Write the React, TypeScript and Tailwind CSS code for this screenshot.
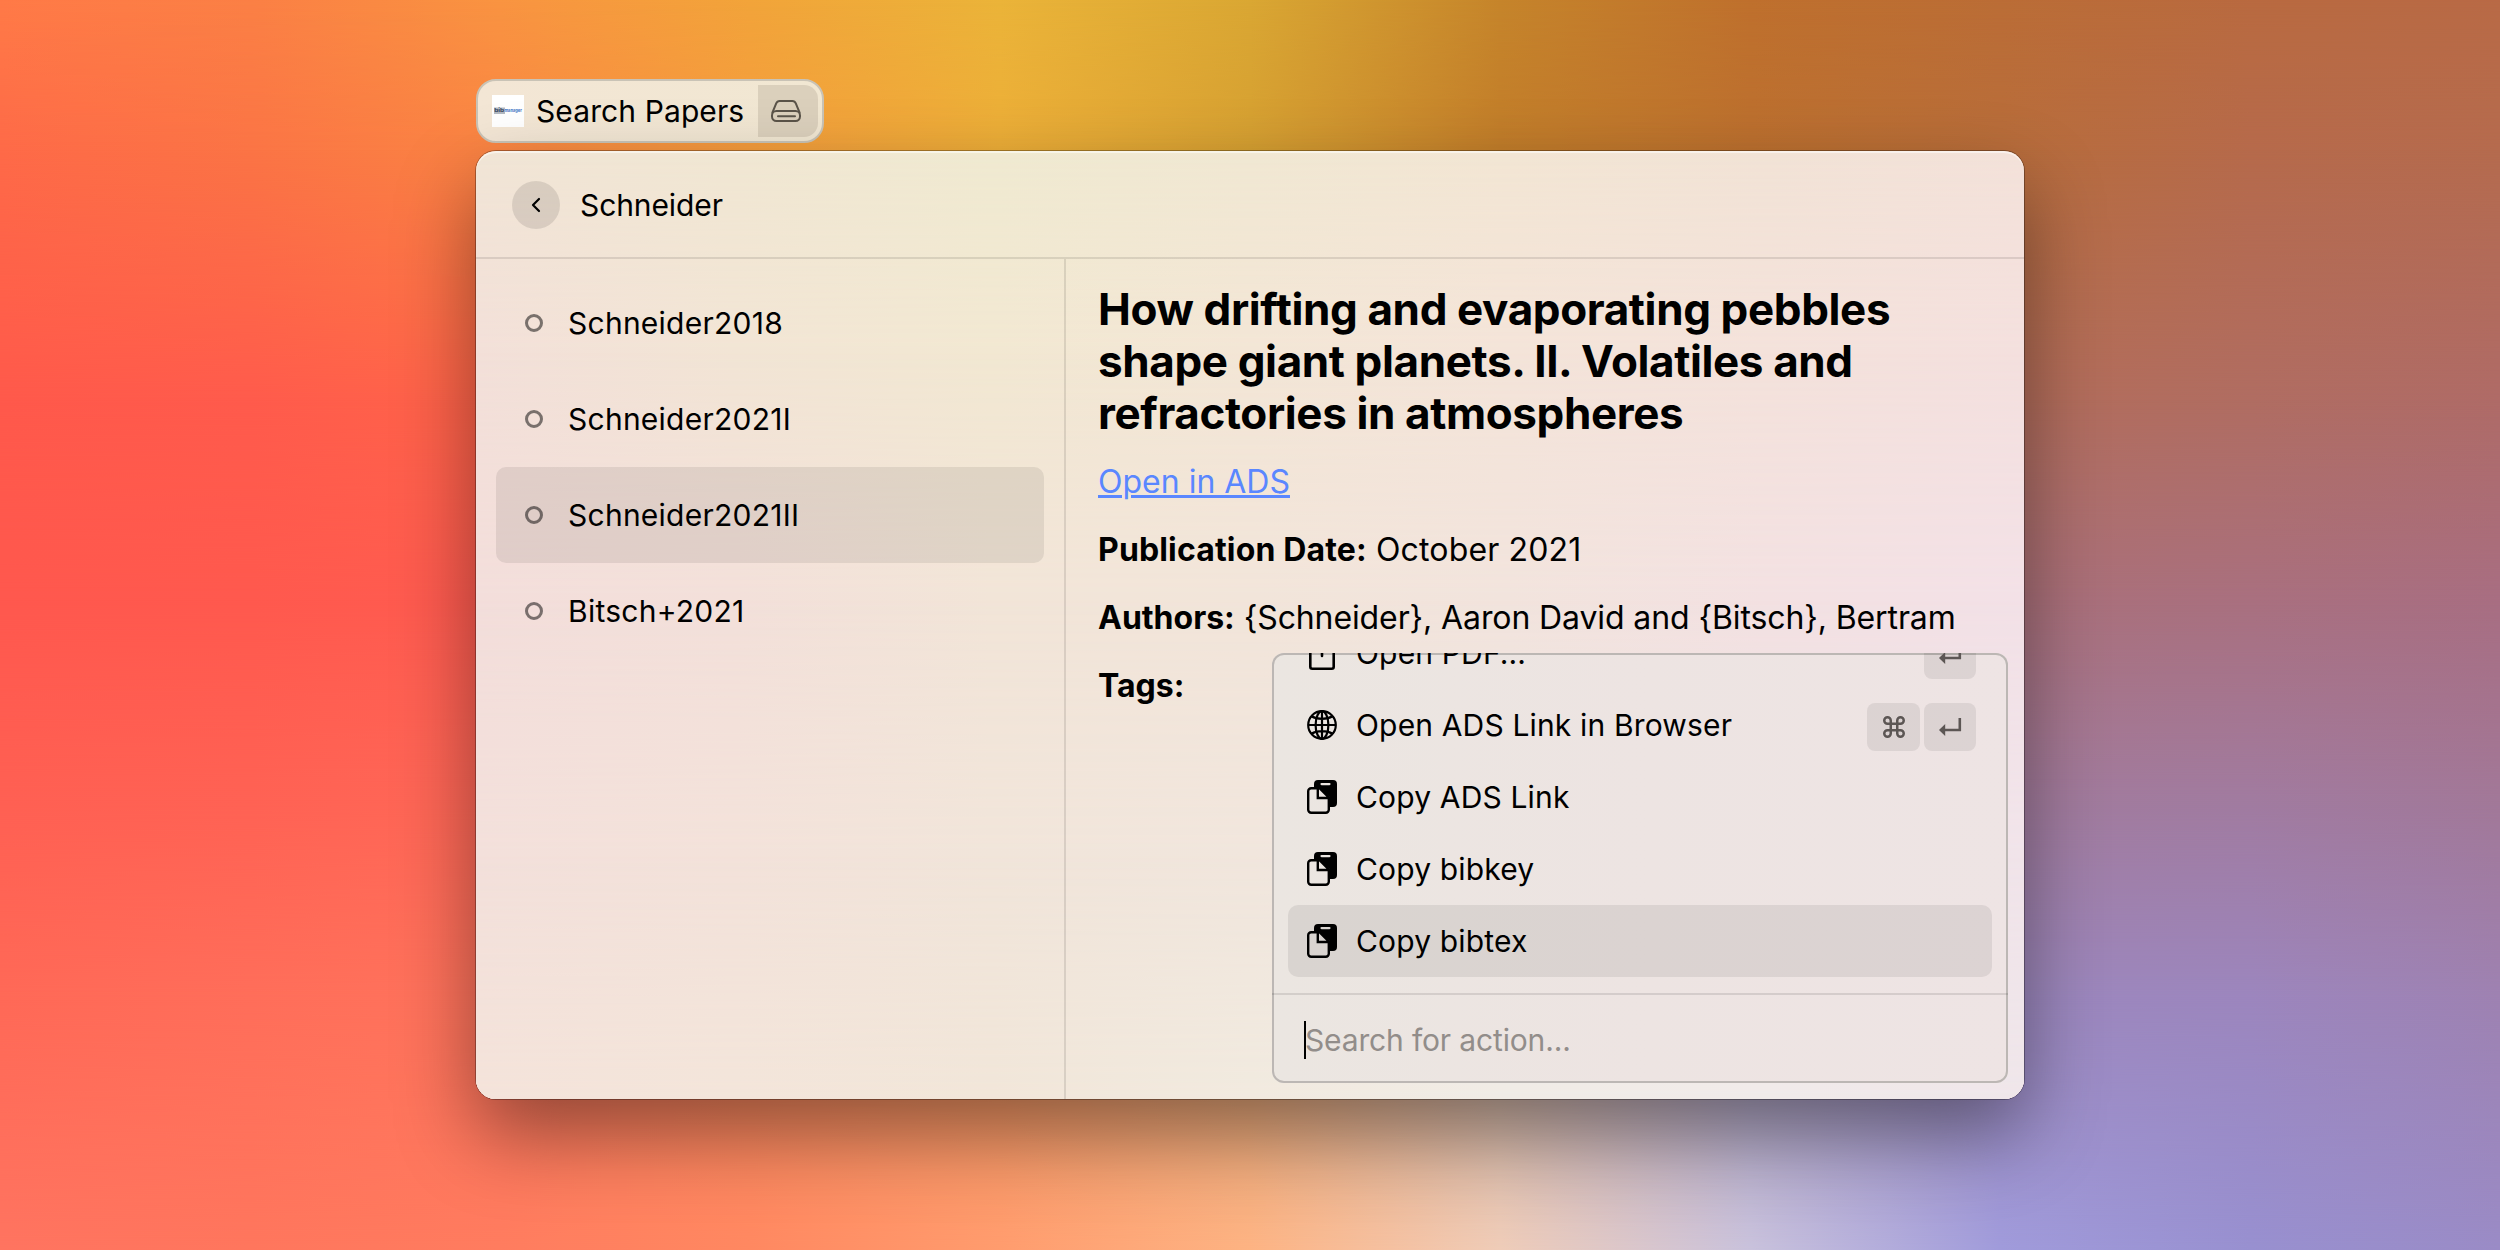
import React from "react";
import { ChevronLeft, Command } from "lucide-react";

type MeshRow = { at: number; colors: string[] };

const WALLPAPER: MeshRow[] = [
  { at: 0, colors: ["#ff7a47", "#fb8045", "#f99441", "#f2a43a", "#ebb439", "#daa733", "#c6852b", "#bf702d", "#bb6d36", "#b96a40", "#b96a46"] },
  { at: 12, colors: ["#fe6a48", "#fb7445", "#fa8543", "#f59c3d", "#edae38", "#d6a032", "#c27d2a", "#bc702f", "#b86d3b", "#b66a4b", "#b56b4e"] },
  { at: 32, colors: ["#ff594b", "#ff5b4c", "#ff6549", "#f08040", "#e09040", "#cc8a40", "#bd7748", "#b87050", "#b36d5a", "#b06d62", "#af6b67"] },
  { at: 48, colors: ["#ff584e", "#ff594e", "#ff5c50", "#f87850", "#e88858", "#cf8660", "#bc7868", "#b17474", "#aa7079", "#a9707f", "#a86e82"] },
  { at: 64, colors: ["#ff6053", "#ff6254", "#ff6857", "#fa8058", "#f09060", "#d89c78", "#bb9290", "#a88098", "#a27b9c", "#a17ba0", "#a27898"] },
  { at: 80, colors: ["#ff6957", "#ff6e5a", "#ff745c", "#fc8a5e", "#f59862", "#e3a678", "#c6aca0", "#a598ba", "#9c88be", "#9c86be", "#9e82b2"] },
  { at: 100, colors: ["#ff7460", "#ff765d", "#ff7c5f", "#ff8861", "#ff9c6e", "#fdb383", "#efccb8", "#c9c2dc", "#a09bdb", "#9890d0", "#9a8bc6"] },
];

const GLASS: MeshRow[] = [
  { at: 0, colors: ["#f1e5d6", "#f1e7d3", "#f0ead1", "#f1e8d3", "#f3e6d4", "#f2e3d6", "#f4e2da"] },
  { at: 21, colors: ["#f3e0d9", "#f2e5d5", "#f2e8d2", "#f3e6d6", "#f4e4d9", "#f4e2db", "#f4e0de"] },
  { at: 47, colors: ["#f3dedb", "#f3e0da", "#f2e5d8", "#f2e5da", "#f2e4dd", "#f3e1e2", "#f3e1e7"] },
  { at: 74, colors: ["#f3e0db", "#f3e2da", "#f1e5da", "#f1e6dd", "#f0e5e2", "#f1e3e5", "#f1e4ea"] },
  { at: 100, colors: ["#f4e3da", "#f3e5da", "#f1e6d9", "#f1eadf", "#f0ece6", "#f0ebea", "#efe6ea"] },
];

function Mesh({ rows }: { rows: MeshRow[] }) {
  return (
    <div aria-hidden="true" className="absolute inset-0 overflow-hidden rounded-[inherit]">
      {rows.map((row, i) => {
        const mask =
          i === 0 ? undefined : `linear-gradient(to bottom, transparent ${rows[i - 1].at}%, black ${row.at}%)`;
        return (
          <div
            key={row.at}
            className="absolute inset-0"
            style={{
              backgroundImage: `linear-gradient(to right, ${row.colors.join(", ")})`,
              maskImage: mask,
              WebkitMaskImage: mask,
            }}
          />
        );
      })}
    </div>
  );
}

function BibLogo() {
  return (
    <svg width="32" height="32" viewBox="0 0 32 32" overflow="visible">
      <rect width="32" height="32" fill="#fff" />
      <rect x="2" y="12.500" width="11" height="6.500" fill="#b4bac2" />
      <text x="2.200" y="17.400" fontSize="5" fontWeight="700" textLength="10" lengthAdjust="spacingAndGlyphs" fill="#33435c">
        bib
      </text>
      <text x="12.400" y="17.400" fontSize="5" fontWeight="700" textLength="17.500" lengthAdjust="spacingAndGlyphs" fill="#3b74c4">
        manager
      </text>
    </svg>
  );
}

function DriveIcon() {
  return (
    <svg width="32" height="24" viewBox="0 0 32 24" fill="none" stroke="#5b5449" strokeWidth="2" strokeLinecap="round" strokeLinejoin="round">
      <path d="M2.400 13.600 6.200 4.400C6.900 2.700 8 2 9.600 2h12.800c1.600 0 2.700.7 3.400 2.400l3.800 9.200" />
      <rect x="2" y="12" width="28" height="10" rx="4.400" />
      <path d="M8 17.300h17" />
    </svg>
  );
}

function OpenIcon() {
  return (
    <svg width="30" height="36" viewBox="0 0 30 36" fill="none" stroke="#000" strokeWidth="2.600" strokeLinecap="round">
      <path d="M11 11H5.300a2 2 0 0 0-2 2v18.700a2 2 0 0 0 2 2h19.400a2 2 0 0 0 2-2V13a2 2 0 0 0-2-2H19M15 21V3M10.500 7.500 15 3l4.500 4.500" />
    </svg>
  );
}

function GlobeIcon() {
  return (
    <svg width="30" height="30" viewBox="0 0 30 30" fill="none" stroke="#000" strokeWidth="2.200">
      <circle cx="15" cy="15" r="13.800" />
      <ellipse cx="15" cy="15" rx="6.400" ry="13.800" />
      <path d="M15 1v28M1 15h28M4.500 6.300C10 9.800 20 9.800 25.500 6.300M4.500 23.700C10 20.200 20 20.200 25.500 23.700" />
    </svg>
  );
}

function CopyIcon() {
  return (
    <svg width="30" height="34" viewBox="0 0 30 34">
      <path
        fillRule="evenodd"
        d="M7 8V4a4 4 0 0 1 4-4h15a4 4 0 0 1 4 4v19a4 4 0 0 1-4 4h-3V17.500L12.500 8ZM14.500 3a1 1 0 0 0 0 2.200h8a1 1 0 0 0 0-2.200Z"
      />
      <path
        d="M12.500 8.200H4.200a3 3 0 0 0-3 3v18.600a3 3 0 0 0 3 3h14.600a3 3 0 0 0 3-3V17.500ZM10.800 8v10H22"
        fill="none"
        stroke="#000"
        strokeWidth="2.400"
      />
    </svg>
  );
}

function ReturnIcon() {
  return (
    <svg width="24" height="20" viewBox="0 0 24 20">
      <path d="M21.800 1v12H6" fill="none" stroke="#5c5654" strokeWidth="2.600" />
      <path d="M1 13 7.200 7v12Z" fill="#5c5654" />
    </svg>
  );
}

function Key({ children, className = "" }: { children: React.ReactNode; className?: string }) {
  return (
    <span className={`flex h-12 items-center justify-center rounded-lg bg-black/[0.075] ${className}`}>{children}</span>
  );
}

const PAPERS = ["Schneider2018", "Schneider2021I", "Schneider2021II", "Bitsch+2021"];
const SELECTED_PAPER = "Schneider2021II";

function PaperList() {
  return (
    <ul className="flex w-[590px] shrink-0 flex-col border-r-2 border-black/10 px-5 pt-4">
      {PAPERS.map((name) => (
        <li
          key={name}
          className={`flex h-24 items-center gap-[25px] rounded-[10px] pl-[29px] text-[30px] tracking-[0.25px] ${
            name === SELECTED_PAPER ? "bg-black/[0.08]" : ""
          }`}
        >
          <span className="size-[18px] rounded-full border-[3px] border-black/50" />
          <span>{name}</span>
        </li>
      ))}
    </ul>
  );
}

function PaperDetail() {
  return (
    <article className="flex-1 pl-8 text-[32px] leading-[48px]">
      <h1 className="pt-6 text-[44px] leading-[52px] font-bold tracking-[-0.38px]">
        How drifting and evaporating pebbles
        <br />
        shape giant planets. II. Volatiles and
        <br />
        refractories in atmospheres
      </h1>
      <div className="mt-[19px] flex flex-col gap-5 whitespace-nowrap">
        <p>
          <a className="text-[#5a87ff] underline">Open in ADS</a>
        </p>
        <p className="tracking-[0.15px]">
          <strong className="font-bold">Publication Date:</strong> October 2021
        </p>
        <p className="tracking-[-0.11px]">
          <strong className="font-bold tracking-normal">Authors:</strong>{" "}
          {"{Schneider}, Aaron David and {Bitsch}, Bertram"}
        </p>
        <p>
          <strong className="font-bold">Tags:</strong>
        </p>
      </div>
    </article>
  );
}

const ACTIONS = [
  { label: "Open PDF...", icon: <OpenIcon />, keys: ["return"] },
  { label: "Open ADS Link in Browser", icon: <GlobeIcon />, keys: ["command", "return"] },
  { label: "Copy ADS Link", icon: <CopyIcon />, keys: [] },
  { label: "Copy bibkey", icon: <CopyIcon />, keys: [] },
  { label: "Copy bibtex", icon: <CopyIcon />, keys: [], selected: true },
];

function ActionMenu() {
  return (
    <div className="absolute right-4 bottom-4 flex h-[430px] w-[736px] flex-col overflow-hidden rounded-[12px] bg-linear-to-r from-[#ebe6e1] via-[#ede4e2] to-[#eee4e4] shadow-[inset_0_0_0_2px_#bcb7b4]">
      <ul className="flex h-[340px] flex-col justify-end px-4 pb-4">
        {ACTIONS.map((action) => (
          <li
            key={action.label}
            className={`flex h-[72px] shrink-0 items-center rounded-[10px] pr-4 pl-[19px] text-[30px] tracking-[0.16px] ${
              action.selected ? "bg-black/[0.075]" : ""
            }`}
          >
            <span className="flex w-[30px] justify-center">{action.icon}</span>
            <span className="ml-[19px] flex-1">{action.label}</span>
            <span className="flex gap-1 pt-[3px]">
              {action.keys.map((k) =>
                k === "command" ? (
                  <Key key={k} className="w-[53px]">
                    <Command size={26} strokeWidth={2.3} color="#5c5654" />
                  </Key>
                ) : (
                  <Key key={k} className="w-[52px]">
                    <ReturnIcon />
                  </Key>
                ),
              )}
            </span>
          </li>
        ))}
      </ul>
      <div className="flex flex-1 items-center border-t-2 border-black/10 pt-0.5 pl-8">
        <span className="h-[38px] w-0.5 bg-black" />
        <span className="-ml-px text-[30px] tracking-[-0.15px] text-[#928d8a]">Search for action...</span>
      </div>
    </div>
  );
}

export default function App() {
  return (
    <main className="relative h-[1250px] w-[2500px] overflow-hidden font-[Inter,sans-serif] text-black">
      <Mesh rows={WALLPAPER} />
      <div className="relative flex flex-col items-start gap-2 pt-[79px] pl-[476px]">
        <div className="flex h-16 w-[348px] items-center rounded-[20px] border-2 border-[#c9c3b6] bg-linear-to-r from-[#f3e6d5] to-[#f1e7d2] pr-1 pl-[14px]">
          <BibLogo />
          <span className="ml-3 flex-1 text-[30px] tracking-[0.1px] whitespace-nowrap">Search Papers</span>
          <span className="flex h-[52px] w-[60px] items-center justify-center rounded-r-[14px] bg-[#dbd0bc] pr-1">
            <DriveIcon />
          </span>
        </div>

        <section className="relative h-[948px] w-[1548px] rounded-[20px] shadow-[0_0_0_1px_rgba(0,0,0,0.3),0_36px_80px_rgba(0,0,0,0.42)]">
          <Mesh rows={GLASS} />
          <div className="relative flex h-full flex-col rounded-[20px] shadow-[inset_0_2px_0_rgba(255,255,255,0.5)]">
            <header className="flex h-[108px] items-center gap-5 border-b-2 border-black/10 pt-0.5 pl-9">
              <span className="flex size-12 items-center justify-center rounded-full bg-black/10">
                <ChevronLeft size={24} strokeWidth={2.2} />
              </span>
              <span className="text-[30px] tracking-[-0.1px]">Schneider</span>
            </header>
            <div className="flex flex-1">
              <PaperList />
              <PaperDetail />
            </div>
            <ActionMenu />
          </div>
        </section>
      </div>
    </main>
  );
}
